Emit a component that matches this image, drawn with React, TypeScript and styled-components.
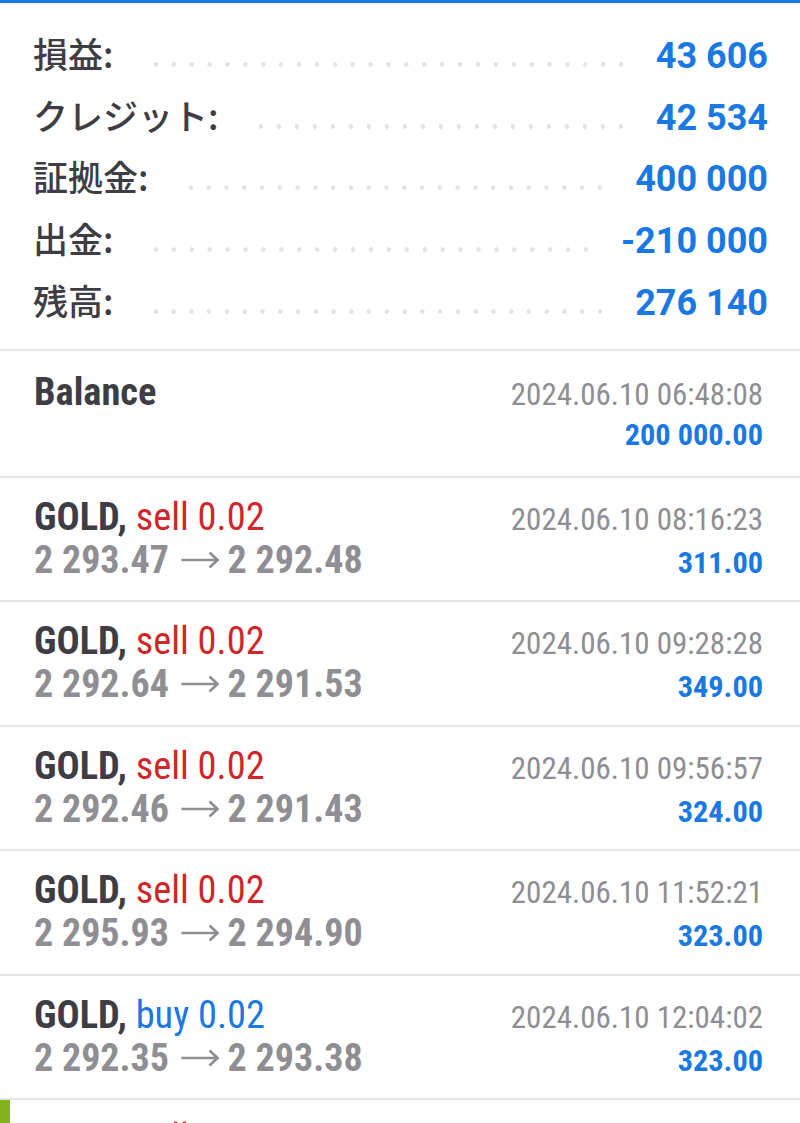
import React from "react";
import styled, { createGlobalStyle } from "styled-components";

const GlobalStyle = createGlobalStyle`
  html, body {
    margin: 0;
    padding: 0;
    background: #ffffff;
  }
  body {
    font-family: "Roboto", "Noto Sans CJK JP", sans-serif;
    -webkit-font-smoothing: antialiased;
  }
`;

const BLUE = "#1a78e2";
const RED = "#d0262b";
const DARK = "#3d3d43";
const GRAY = "#8e8e93";
const LINE = "#e5e5e7";

const Page = styled.div`
  width: 800px;
  height: 1123px;
  overflow: hidden;
  background: #fff;
`;

const TopBar = styled.div`
  height: 3px;
  background: ${BLUE};
`;

const Summary = styled.section`
  padding: 19px 32px 19px 33px;
  border-bottom: 2px solid ${LINE};
`;

const SummaryRow = styled.div`
  display: flex;
  align-items: baseline;
  height: 61.67px;
  line-height: 61.67px;
`;

const Label = styled.span`
  font-family: "Noto Sans CJK JP", "Roboto", sans-serif;
  font-size: 35px;
  font-weight: 500;
  color: ${DARK};
  white-space: nowrap;
`;

const Leader = styled.span`
  flex: 1;
  height: 7px;
  margin: 0 26px 0 34px;
  background-image: radial-gradient(circle at center, #e3e3e3 2px, rgba(255, 255, 255, 0) 2.6px);
  background-size: 17.78px 7px;
  background-repeat: space no-repeat;
`;

const Value = styled.span`
  font-family: "Roboto", sans-serif;
  font-size: 36px;
  font-weight: 700;
  color: ${BLUE};
  white-space: nowrap;
`;

const Trades = styled.section``;

const TradeRow = styled.div<{ $balance?: boolean; $accent?: boolean }>`
  padding: ${(p) => (p.$balance ? "19px 37px 19.5px 34px" : "17px 37px 19.5px 34px")};
  border-bottom: 2px solid ${LINE};
  ${(p) =>
    p.$accent &&
    `
    border-left: 10px solid #7fb51b;
    padding-left: 24px;
    padding-top: 16px;
  `}
`;

const Line = styled.div`
  display: flex;
  justify-content: space-between;
  align-items: baseline;
  height: 43px;
  line-height: 44px;
  font-family: "Roboto Condensed", "Roboto", sans-serif;
  font-stretch: condensed;
`;

const Title = styled.span`
  font-size: 38.4px;
  font-weight: 700;
  color: ${DARK};
  white-space: nowrap;
`;

const Side = styled.span<{ $side: "buy" | "sell" }>`
  font-weight: 400;
  color: ${(p) => (p.$side === "sell" ? RED : BLUE)};
`;

const Prices = styled.span`
  font-size: 38px;
  font-weight: 700;
  color: ${GRAY};
  white-space: nowrap;
`;

const ArrowSvg = styled.svg`
  width: 38px;
  height: 18px;
  vertical-align: 4px;
  margin: 0 0 0 3px;
`;

const DateText = styled.span`
  font-size: 31px;
  font-weight: 400;
  color: ${GRAY};
  white-space: nowrap;
`;

const Profit = styled.span`
  font-size: 30.3px;
  font-weight: 700;
  color: ${BLUE};
  white-space: nowrap;
`;

const Arrow = () => (
  <ArrowSvg viewBox="0 0 38 18" aria-hidden="true">
    <path
      d="M0.5 9 H36.5 M28.5 1.5 L36.5 9 L28.5 16.5"
      fill="none"
      stroke={GRAY}
      strokeWidth="2.6"
      strokeLinecap="butt"
      strokeLinejoin="miter"
    />
  </ArrowSvg>
);

const summary = [
  { label: "損益:", value: "43 606" },
  { label: "クレジット:", value: "42 534" },
  { label: "証拠金:", value: "400 000" },
  { label: "出金:", value: "-210 000" },
  { label: "残高:", value: "276 140" },
];

type Trade = {
  side: "buy" | "sell";
  open: string;
  close: string;
  date: string;
  profit: string;
};

const trades: Trade[] = [
  { side: "sell", open: "2 293.47", close: "2 292.48", date: "2024.06.10 08:16:23", profit: "311.00" },
  { side: "sell", open: "2 292.64", close: "2 291.53", date: "2024.06.10 09:28:28", profit: "349.00" },
  { side: "sell", open: "2 292.46", close: "2 291.43", date: "2024.06.10 09:56:57", profit: "324.00" },
  { side: "sell", open: "2 295.93", close: "2 294.90", date: "2024.06.10 11:52:21", profit: "323.00" },
  { side: "buy", open: "2 292.35", close: "2 293.38", date: "2024.06.10 12:04:02", profit: "323.00" },
  { side: "sell", open: "2 293.10", close: "2 292.05", date: "2024.06.10 12:31:40", profit: "315.00" },
];

export default function App() {
  return (
    <Page>
      <GlobalStyle />
      <TopBar />
      <Summary>
        {summary.map((s) => (
          <SummaryRow key={s.label}>
            <Label>{s.label}</Label>
            <Leader />
            <Value>{s.value}</Value>
          </SummaryRow>
        ))}
      </Summary>
      <Trades>
        <TradeRow $balance>
          <Line>
            <Title>Balance</Title>
            <DateText>2024.06.10 06:48:08</DateText>
          </Line>
          <Line>
            <span />
            <Profit>200 000.00</Profit>
          </Line>
        </TradeRow>
        {trades.map((t, i) => (
          <TradeRow key={t.date} $accent={i === trades.length - 1}>
            <Line>
              <Title>
                GOLD, <Side $side={t.side}>{t.side} 0.02</Side>
              </Title>
              <DateText>{t.date}</DateText>
            </Line>
            <Line>
              <Prices>
                {t.open} <Arrow /> {t.close}
              </Prices>
              <Profit>{t.profit}</Profit>
            </Line>
          </TradeRow>
        ))}
      </Trades>
    </Page>
  );
}
